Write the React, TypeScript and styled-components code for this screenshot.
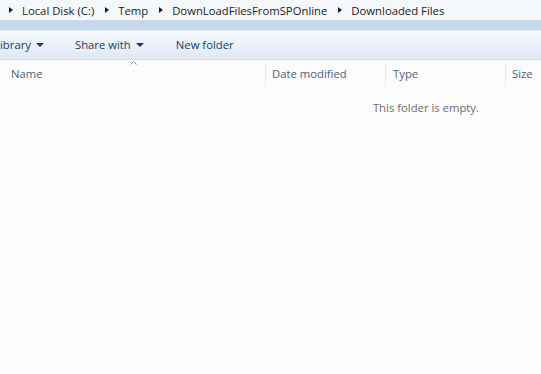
import * as React from "react";
import styled, { createGlobalStyle } from "styled-components";

const Global = createGlobalStyle`
  html, body {
    margin: 0;
    padding: 0;
    background: #fcfcfc;
  }
  body {
    font-family: "Open Sans", "Noto Sans", sans-serif;
    font-size: 11.3px;
    overflow: hidden;
  }
`;

const Window = styled.div`
  width: 541px;
  height: 374px;
  display: flex;
  flex-direction: column;
  background: #fcfcfc;
  overflow: hidden;
`;

const AddressBar = styled.div`
  height: 21px;
  display: flex;
  align-items: center;
  padding-left: 9px;
  background: #f5f8fb;
  border-bottom: 1px solid #d3dae3;
  box-sizing: border-box;
  color: #1b1b1b;
  white-space: nowrap;
`;

const Crumb = styled.span`
  display: flex;
  align-items: center;
`;

const CrumbArrow = styled.span`
  width: 0;
  height: 0;
  border-top: 3.5px solid transparent;
  border-bottom: 3.5px solid transparent;
  border-left: 4px solid #1b1b1b;
  margin-right: 9px;
`;

const CrumbLabel = styled.span`
  margin-right: 11px;
  line-height: 21px;
`;

const Band = styled.div`
  height: 9px;
  background: linear-gradient(#c4d6ec, #cadbef);
  border-bottom: 1px solid #e4edf7;
`;

const Toolbar = styled.div`
  height: 29px;
  display: flex;
  align-items: center;
  padding-bottom: 1px;
  box-sizing: border-box;
  background: linear-gradient(#f5f9fd, #e8eff8 60%, #dfe8f4);
  border-bottom: 1px solid #d4dde7;
  color: #1e395b;
  white-space: nowrap;
`;

const ToolButton = styled.span<{ $offset: number }>`
  display: flex;
  align-items: center;
  margin-left: ${(p) => p.$offset}px;
`;

const DropArrow = styled.span`
  width: 0;
  height: 0;
  border-left: 4px solid transparent;
  border-right: 4px solid transparent;
  border-top: 4px solid #1e395b;
  margin-left: 5px;
  margin-top: 1px;
`;

const HeaderRow = styled.div`
  height: 26px;
  display: flex;
  align-items: stretch;
  background: #fcfcfc;
  color: #4c607a;
`;

const HeaderCell = styled.div<{ $width: number; $pad: number }>`
  width: ${(p) => p.$width}px;
  flex: none;
  display: flex;
  align-items: center;
  padding-left: ${(p) => p.$pad}px;
  padding-bottom: 1px;
  box-sizing: border-box;
  border-right: 1px solid #e5eaf0;
  margin: 2px 0 0;
  position: relative;
  white-space: nowrap;
`;

const SortArrow = styled.svg`
  position: absolute;
  left: 130px;
  top: -1px;
`;

const Content = styled.div`
  flex: 1;
  display: flex;
  justify-content: flex-end;
  padding: 14px 62px 0 0;
  color: #6d6d6d;
`;

const crumbs = ["Local Disk (C:)", "Temp", "DownLoadFilesFromSPOnline", "Downloaded Files"];

export default function App() {
  return (
    <Window>
      <Global />
      <AddressBar>
        {crumbs.map((c) => (
          <Crumb key={c}>
            <CrumbArrow />
            <CrumbLabel>{c}</CrumbLabel>
          </Crumb>
        ))}
      </AddressBar>
      <Band />
      <Toolbar>
        <ToolButton $offset={0}>
          ibrary
          <DropArrow />
        </ToolButton>
        <ToolButton $offset={31}>
          Share with
          <DropArrow />
        </ToolButton>
        <ToolButton $offset={32}>New folder</ToolButton>
      </Toolbar>
      <HeaderRow>
        <HeaderCell $width={266} $pad={11}>
          <SortArrow width="7" height="4" viewBox="0 0 7 4">
            <path d="M0.5 3.5 L3.5 0.5 L6.5 3.5" fill="none" stroke="#7b8ea6" strokeWidth="1" />
          </SortArrow>
          Name
        </HeaderCell>
        <HeaderCell $width={120} $pad={6}>Date modified</HeaderCell>
        <HeaderCell $width={120} $pad={7}>Type</HeaderCell>
        <HeaderCell $width={60} $pad={6}>Size</HeaderCell>
      </HeaderRow>
      <Content>This folder is empty.</Content>
    </Window>
  );
}
